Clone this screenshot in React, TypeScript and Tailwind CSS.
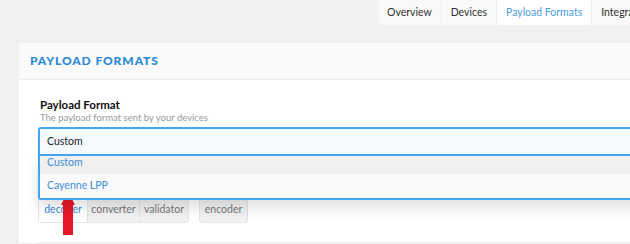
const tabs = ["Overview", "Devices", "Payload Formats", "Integrations"];

function Arrow() {
  return (
    <svg
      className="pointer-events-none absolute left-[60px] top-[191px]"
      width="16"
      height="47"
      viewBox="0 0 16 47"
    >
      <polygon points="8,0 1,14 3,14 3,44 13,44 13,14 15,14" fill="#e8182b" />
    </svg>
  );
}

export default function App() {
  return (
    <div
      className="relative h-[244px] w-[630px] overflow-hidden bg-[#f1f1f1] text-[#222]"
      style={{ fontFamily: "Lato, 'Open Sans', sans-serif" }}
    >
      <div className="ml-[378px] flex h-[25px] w-max rounded-bl-[4px] bg-[#f9f9f9] text-[10.5px]">
        {tabs.map((t, i) => (
          <div
            key={t}
            className={
              i === 2
                ? "flex shrink-0 items-center whitespace-nowrap border-l border-[#eeeeee] bg-white px-[9px] text-[#4a9de0]"
                : "flex shrink-0 items-center whitespace-nowrap border-l border-[#eeeeee] px-[9px] text-[#333] first:border-l-0"
            }
          >
            {t}
          </div>
        ))}
      </div>

      <div className="ml-[19px] mt-[18px] w-[640px] rounded-tl-[4px] bg-white">
        <div className="flex h-[37px] items-center border-b border-[#ececec] bg-[#fafafa] pl-[11px]">
          <h2 className="text-[12px] font-black tracking-[0.9px] text-[#2a8ad8]">PAYLOAD FORMATS</h2>
        </div>

        <div className="relative pl-[19px] pt-[18px]">
          <div className="ml-[2px] text-[11.5px] font-bold leading-[14px] text-[#111]">Payload Format</div>
          <div className="ml-[2px] text-[9.5px] leading-[12px] text-[#9a9a9a]">The payload format sent by your devices</div>

          <div className="relative mt-[3px]">
            <div className="flex h-[29px] items-center rounded-t-[3px] border-2 border-[#42a6f0] bg-[#f5faff] pl-[7px] text-[10.5px] text-[#222]">
              Custom
            </div>
            <div className="absolute left-0 right-0 top-[29px] z-10 h-[44px] overflow-hidden rounded-b-[3px] border-x-2 border-b-2 border-[#42a6f0] bg-[#fafafa] text-[10.5px] text-[#3d8fd6] shadow-[0_8px_14px_rgba(0,0,0,0.12)]">
              <div className="-mt-[4px] flex h-[22px] items-center bg-[#f0f0f0] pl-[7px]">Custom</div>
              <div className="flex h-[23px] items-center pl-[7px]">Cayenne LPP</div>
            </div>
          </div>

          <div className="mt-[41px] flex gap-[10px] text-[10.5px] text-[#777]">
            <div className="flex h-[26px] overflow-hidden rounded-[3px] border border-[#e4e4e4]">
              <div className="flex w-[48px] items-center justify-center bg-white text-[#3d8fd6]">decoder</div>
              <div className="flex w-[52px] items-center justify-center border-l border-[#e4e4e4] bg-[#f1f1f1]">converter</div>
              <div className="flex w-[49px] items-center justify-center border-l border-[#e4e4e4] bg-[#f1f1f1]">validator</div>
            </div>
            <div className="flex h-[26px] w-[49px] items-center justify-center rounded-[3px] border border-[#e4e4e4] bg-[#f1f1f1]">
              encoder
            </div>
          </div>

          <div className="mt-[19px] border-t border-[#ececec]" />
        </div>
      </div>

      <Arrow />
    </div>
  );
}
